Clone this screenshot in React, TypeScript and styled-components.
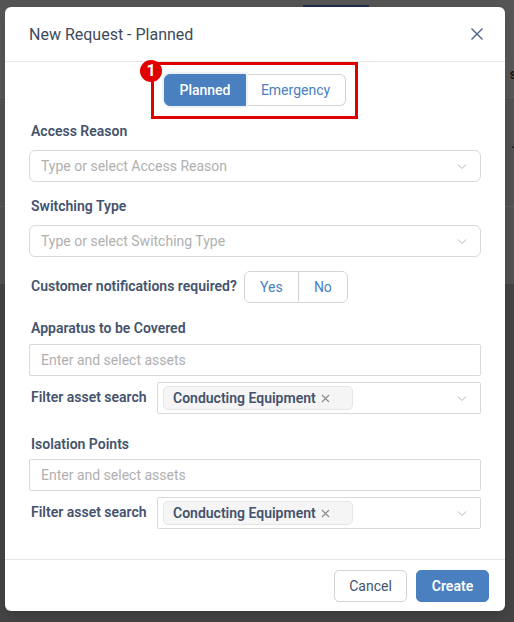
import React from "react";
import styled, { createGlobalStyle } from "styled-components";

const Global = createGlobalStyle`
  html, body { margin: 0; padding: 0; }
  body {
    font-family: Roboto, "Liberation Sans", Arial, sans-serif;
    width: 514px; height: 622px; overflow: hidden;
    background: #444444;
  }
  * { box-sizing: border-box; }
`;

const Page = styled.div`
  position: relative;
  width: 514px;
  height: 622px;
  display: flex;
  flex-direction: column;
`;

const Band = styled.div<{ $h: number; $bg: string; $line?: boolean; $pt?: number }>`
  height: ${(p) => p.$h}px;
  background: ${(p) => p.$bg};
  border-bottom: ${(p) => (p.$line ? "1px solid #5e5e5e" : "none")};
  display: flex;
  justify-content: flex-end;
  align-items: flex-start;
  padding-top: ${(p) => p.$pt ?? 0}px;
  color: #1a1a1a;
  font-size: 14px;
  line-height: 16px;
  font-weight: 700;
  flex: none;
`;

const TopBar = styled.div`
  height: 7px;
  background: #555;
  display: flex;
  padding-left: 303px;
  align-items: flex-end;
  flex: none;
`;

const DarkTab = styled.div`
  width: 66px;
  height: 2px;
  background: #1e2f48;
`;

const EdgeText = styled.span`
  margin-right: -3px;
`;

const Modal = styled.div`
  position: absolute;
  left: 5px;
  top: 7px;
  width: 500px;
  height: 604px;
  background: #fff;
  border-radius: 6px;
  display: flex;
  flex-direction: column;
  box-shadow: 0 4px 12px rgba(0, 0, 0, 0.15);
`;

const Header = styled.div`
  height: 55px;
  flex: none;
  display: flex;
  align-items: center;
  justify-content: space-between;
  padding: 0 20px 0 24px;
  border-bottom: 1px solid #e6e6e6;
`;

const Title = styled.div`
  font-size: 16px;
  color: #3e4a5c;
`;

const CloseBtn = styled.button`
  border: none;
  background: none;
  padding: 0;
  width: 16px;
  height: 16px;
  display: flex;
  align-items: center;
  justify-content: center;
`;

const Body = styled.div`
  flex: 1;
  display: flex;
  flex-direction: column;
  padding: 0 24px;
`;

const ToggleRow = styled.div`
  display: flex;
  justify-content: center;
  margin-top: 12px;
`;

const ToggleWrap = styled.div`
  position: relative;
  display: flex;
`;

const Annotation = styled.div`
  position: absolute;
  left: -13px;
  top: -12px;
  width: 207px;
  height: 57px;
  border: 3px solid #e10000;
  pointer-events: none;
`;

const Badge = styled.div`
  position: absolute;
  left: -24px;
  top: -14px;
  width: 22px;
  height: 22px;
  border-radius: 50%;
  background: #e10000;
  color: #fff;
  font-size: 16px;
  font-weight: 700;
  display: flex;
  align-items: center;
  justify-content: center;
  line-height: 1;
`;

const SegBtn = styled.button<{ $active?: boolean; $w: number; $first?: boolean }>`
  width: ${(p) => p.$w}px;
  height: 32px;
  font-family: inherit;
  font-size: 14px;
  font-weight: ${(p) => (p.$active ? 500 : 400)};
  color: ${(p) => (p.$active ? "#fff" : "#4a80c0")};
  background: ${(p) => (p.$active ? "#4a80c0" : "#fff")};
  border: 1px solid ${(p) => (p.$active ? "#4a80c0" : "#d4d4d4")};
  border-left-width: ${(p) => (p.$first ? 1 : 0)}px;
  border-radius: ${(p) => (p.$first ? "6px 0 0 6px" : "0 6px 6px 0")};
  box-shadow: ${(p) => (p.$active ? "0 0 0 2px #edf3f9" : "none")};
  position: relative;
  z-index: ${(p) => (p.$active ? 1 : 0)};
  padding: 0;
`;

const Label = styled.div<{ $mt: number; $mb: number }>`
  font-size: 14px;
  font-weight: 600;
  color: #44536d;
  line-height: 20px;
  margin-top: ${(p) => p.$mt}px;
  margin-bottom: ${(p) => p.$mb}px;
  padding-left: 2px;
`;

const SelectBox = styled.div<{ $radius: number; $grow?: boolean }>`
  height: 32px;
  flex: ${(p) => (p.$grow ? "1 1 auto" : "none")};
  border: 1px solid #d9d9d9;
  border-radius: ${(p) => p.$radius}px;
  display: flex;
  align-items: center;
  justify-content: space-between;
  padding: 0 13px 0 11px;
  font-size: 14px;
  color: #b3b3b3;
`;

const Placeholder = styled.span`
  color: #b0b0b0;
`;

const InlineRow = styled.div<{ $mt: number }>`
  display: flex;
  align-items: center;
  margin-top: ${(p) => p.$mt}px;
  flex: none;
`;

const InlineLabel = styled.div<{ $w?: number }>`
  font-size: 14px;
  font-weight: 600;
  color: #44536d;
  padding-left: 2px;
  width: ${(p) => (p.$w ? `${p.$w}px` : "auto")};
  flex: none;
  margin-right: ${(p) => (p.$w ? 0 : 7)}px;
  margin-top: -3px;
`;

const YesNo = styled.div`
  display: flex;
  border: 1px solid #d4d4d4;
  border-radius: 6px;
  height: 32px;
  overflow: hidden;
`;

const YNBtn = styled.button<{ $w: number; $divider?: boolean }>`
  width: ${(p) => p.$w}px;
  border: none;
  border-left: ${(p) => (p.$divider ? "1px solid #d4d4d4" : "none")};
  background: #fff;
  color: #4a80c0;
  font-family: inherit;
  font-size: 14px;
  padding: 0;
`;

const Chip = styled.div`
  height: 24px;
  width: 190px;
  display: flex;
  align-items: center;
  padding-left: 9px;
  margin-left: -6px;
  background: #f5f5f5;
  border: 1px solid #e6e6e6;
  border-radius: 5px;
  font-size: 14px;
  font-weight: 600;
  color: #44536d;
  gap: 5px;
`;

const Footer = styled.div`
  height: 52px;
  flex: none;
  border-top: 1px solid #e6e6e6;
  display: flex;
  justify-content: flex-end;
  align-items: flex-start;
  padding: 10px 16px 0 0;
  gap: 9px;
`;

const FooterBtn = styled.button<{ $primary?: boolean }>`
  height: 32px;
  width: 73px;
  border-radius: 5px;
  font-family: inherit;
  font-size: 14px;
  font-weight: ${(p) => (p.$primary ? 600 : 400)};
  color: ${(p) => (p.$primary ? "#fff" : "#44536d")};
  background: ${(p) => (p.$primary ? "#4a80c0" : "#fff")};
  border: 1px solid ${(p) => (p.$primary ? "#4a80c0" : "#d4d4d4")};
  padding: 0;
`;

const Chevron = () => (
  <svg width="10" height="7" viewBox="0 0 10 7">
    <path d="M1 1.5 L5 5.5 L9 1.5" fill="none" stroke="#b5b5b5" strokeWidth="1" />
  </svg>
);

const SmallX = ({ c = "#888" }: { c?: string }) => (
  <svg width="9" height="9" viewBox="0 0 9 9">
    <path d="M1 1 L8 8 M8 1 L1 8" stroke={c} strokeWidth="1.1" />
  </svg>
);

const FilterRow = ({ mt }: { mt: number }) => (
  <InlineRow $mt={mt}>
    <InlineLabel $w={128}>Filter asset search</InlineLabel>
    <SelectBox $radius={2} $grow>
      <Chip>
        Conducting Equipment <SmallX c="#8a8a8a" />
      </Chip>
      <Chevron />
    </SelectBox>
  </InlineRow>
);

export default function App() {
  return (
    <>
      <Global />
      <Page>
        <TopBar>
          <DarkTab />
        </TopBar>
        <Band $h={91} $bg="#575757" $line $pt={59}>
          <EdgeText>s</EdgeText>
        </Band>
        <Band $h={109} $bg="#525252" $line $pt={41}>
          <EdgeText>-</EdgeText>
        </Band>
        <Band $h={77} $bg="#525252" />
        <Band $h={337} $bg="#444444" />
        <Modal>
          <Header>
            <Title>New Request - Planned</Title>
            <CloseBtn aria-label="close">
              <svg width="14" height="14" viewBox="0 0 14 14">
                <path d="M1.5 1.5 L12.5 12.5 M12.5 1.5 L1.5 12.5" stroke="#4e6282" strokeWidth="1.4" />
              </svg>
            </CloseBtn>
          </Header>
          <Body>
            <ToggleRow>
              <ToggleWrap>
                <SegBtn $active $first $w={82}>Planned</SegBtn>
                <SegBtn $w={100}>Emergency</SegBtn>
                <Annotation />
                <Badge>1</Badge>
              </ToggleWrap>
            </ToggleRow>
            <Label $mt={15} $mb={9}>Access Reason</Label>
            <SelectBox $radius={6}>
              <Placeholder>Type or select Access Reason</Placeholder>
              <Chevron />
            </SelectBox>
            <Label $mt={14} $mb={9}>Switching Type</Label>
            <SelectBox $radius={6}>
              <Placeholder>Type or select Switching Type</Placeholder>
              <Chevron />
            </SelectBox>
            <InlineRow $mt={14}>
              <InlineLabel>Customer notifications required?</InlineLabel>
              <YesNo>
                <YNBtn $w={53}>Yes</YNBtn>
                <YNBtn $w={49} $divider>No</YNBtn>
              </YesNo>
            </InlineRow>
            <Label $mt={15} $mb={6}>Apparatus to be Covered</Label>
            <SelectBox $radius={2}>
              <Placeholder>Enter and select assets</Placeholder>
            </SelectBox>
            <FilterRow mt={6} />
            <Label $mt={20} $mb={5}>Isolation Points</Label>
            <SelectBox $radius={2}>
              <Placeholder>Enter and select assets</Placeholder>
            </SelectBox>
            <FilterRow mt={6} />
          </Body>
          <Footer>
            <FooterBtn>Cancel</FooterBtn>
            <FooterBtn $primary>Create</FooterBtn>
          </Footer>
        </Modal>
      </Page>
    </>
  );
}
